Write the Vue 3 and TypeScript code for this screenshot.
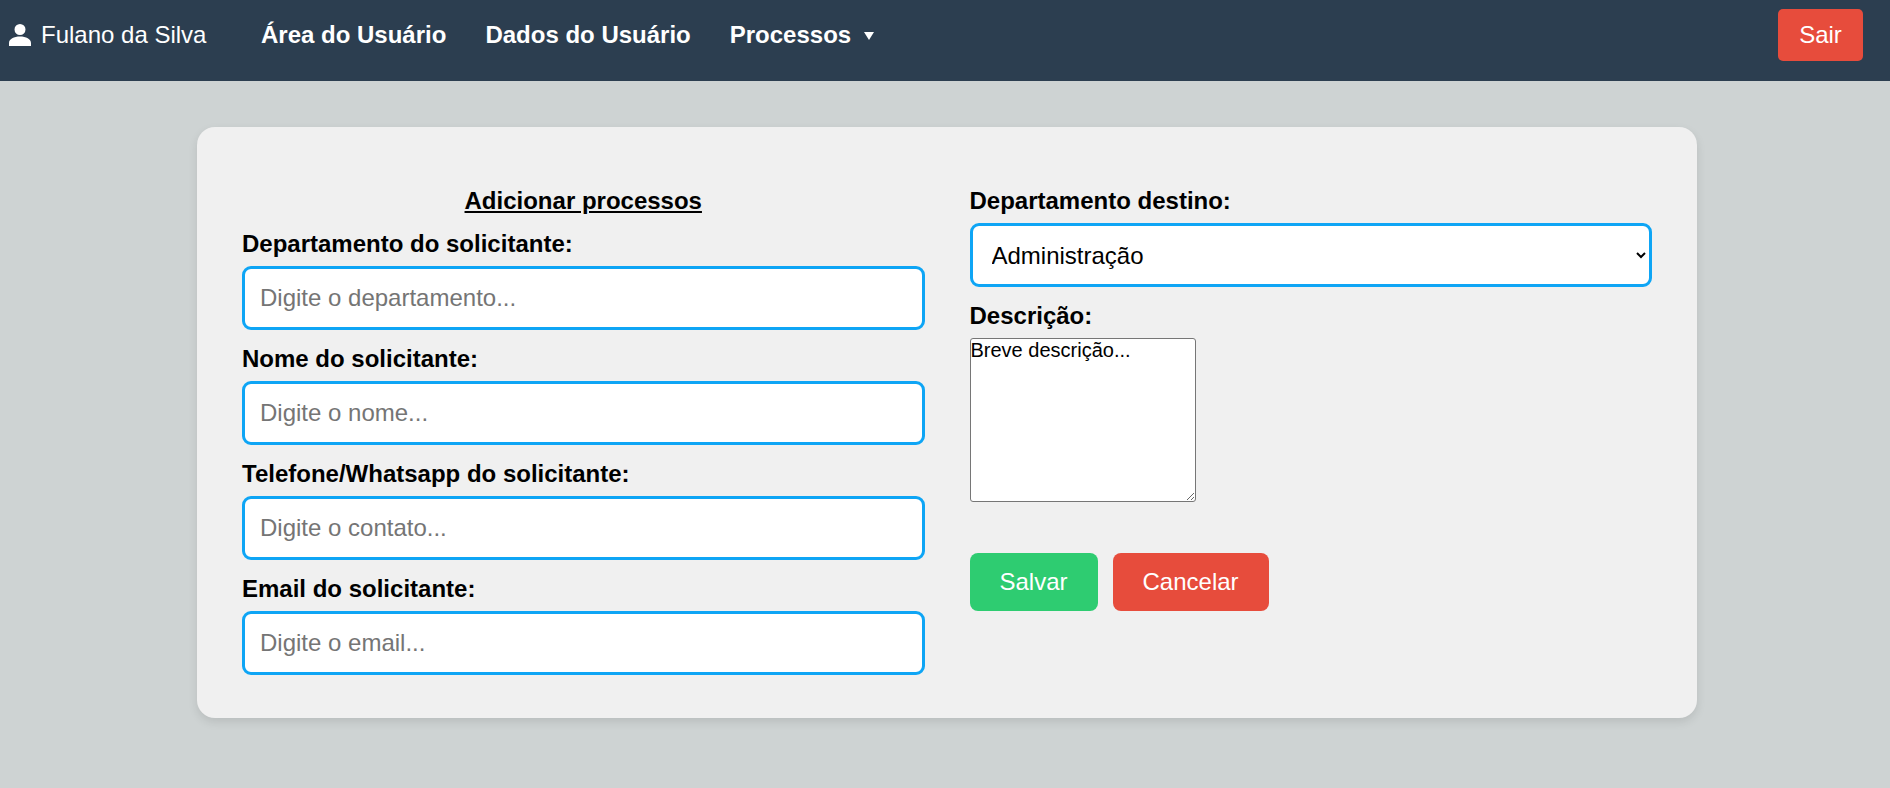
<script setup lang="ts">
import { ref } from 'vue'

interface Field { id: string; label: string; placeholder: string }

const fields: Field[] = [
  { id: 'departamento', label: 'Departamento do solicitante:', placeholder: 'Digite o departamento...' },
  { id: 'nome', label: 'Nome do solicitante:', placeholder: 'Digite o nome...' },
  { id: 'contato', label: 'Telefone/Whatsapp do solicitante:', placeholder: 'Digite o contato...' },
  { id: 'email', label: 'Email do solicitante:', placeholder: 'Digite o email...' },
]
const values = ref<Record<string, string>>({ departamento: '', nome: '', contato: '', email: '' })
const destino = ref('Administração')
const descricao = ref('Breve descrição...')
</script>

<template>
  <div class="page">
    <header class="navbar">
      <div class="user">
        <svg class="user-icon" viewBox="0 0 24 24"><path fill="#fff" d="M12 12a5.5 5.5 0 1 0 0-11 5.500 5.500 0 0 0 0 11zM12 13.500C6 13.500 1 16 1 20v3h22v-3c0-4-5-6.500-11-6.500z" /></svg>
        <span>Fulano da Silva</span>
      </div>
      <nav class="links">
        <a>Área do Usuário</a>
        <a>Dados do Usuário</a>
        <a class="menu">Processos <svg class="caret" viewBox="0 0 10 8"><path fill="#fff" d="M0 0h10L5 8z" /></svg></a>
      </nav>
      <button class="logout">Sair</button>
    </header>
    <main class="card">
      <form class="columns" @submit.prevent>
        <section class="column">
          <h2 class="title">Adicionar processos</h2>
          <div v-for="f in fields" :key="f.id" class="field">
            <label :for="f.id">{{ f.label }}</label>
            <input :id="f.id" v-model="values[f.id]" type="text" :placeholder="f.placeholder" />
          </div>
        </section>
        <section class="column">
          <label for="destino">Departamento destino:</label>
          <select id="destino" v-model="destino"><option>Administração</option></select>
          <label for="descricao">Descrição:</label>
          <textarea id="descricao" v-model="descricao" spellcheck="false"></textarea>
          <div class="actions">
            <button class="save">Salvar</button>
            <button class="cancel" type="button">Cancelar</button>
          </div>
        </section>
      </form>
    </main>
  </div>
</template>

<style>
body { background: #ced3d3; }
</style>

<style scoped>
.page { min-height: 788px; font: 24px/28px "Liberation Sans", Arial, sans-serif; color: #000; }
.page * { box-sizing: border-box; }
.navbar { height: 81px; background: #2c3e50; color: #fff; display: flex; align-items: flex-start; padding: 9px 27px 0 8px; }
.user { display: flex; align-items: center; gap: 9px; height: 52px; width: 253px; }
.user-icon { width: 24px; height: 24px; }
.links { display: flex; gap: 39px; height: 52px; line-height: 52px; font-weight: 700; }
.caret { width: 10px; height: 8px; margin-left: 6px; vertical-align: 3px; }
button { border: 0; color: #fff; font: inherit; }
.logout { margin-left: auto; width: 85px; height: 52px; border-radius: 5px; background: #e74c3c; }
.card { width: 1500px; height: 591px; margin: 46px 0 0 197px; padding: 60px 45px 45px; border-radius: 18px; background: #f0f0f0; box-shadow: 0 4px 10px rgba(0, 0, 0, .1); }
.columns { display: grid; grid-template-columns: 1fr 1fr; column-gap: 45px; }
.column { display: flex; flex-direction: column; }
.title { margin: 0 0 15px; font-size: 24px; line-height: 28px; text-align: center; text-decoration: underline; }
label { display: block; font-weight: 700; margin-bottom: 8px; }
.field { margin-bottom: 15px; }
input, select { display: block; width: 100%; height: 64px; border: 3px solid #0ea5f5; border-radius: 9px; background: #fff; font: inherit; padding: 0 15px; color: #000; }
select { margin-bottom: 15px; }
input::placeholder { color: #757575; }
textarea { width: 226px; height: 164px; margin: 0; padding: 0; border: 1px solid #767676; border-radius: 3px; font: 20px/23px "Liberation Sans", Arial, sans-serif; }
.actions { display: flex; gap: 15px; margin-top: 51px; }
.save, .cancel { height: 58px; padding: 0 30px; border-radius: 8px; }
.save { background: #2ecc71; }
.cancel { background: #e74c3c; }
</style>
